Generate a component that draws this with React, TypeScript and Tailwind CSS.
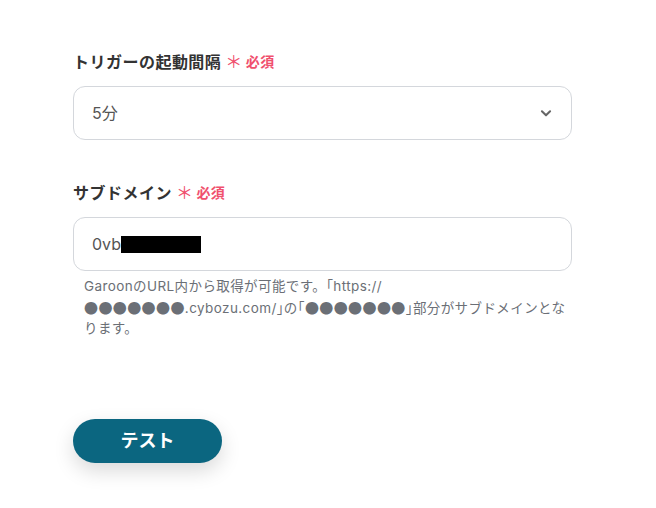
import React from "react"

function Required() {
    return (
        <span className="ml-1 inline-flex items-center gap-[3px] text-[14px] font-bold text-[#f0506e]">
            <span className="text-[17px] font-normal leading-none">＊</span>
            <span>必須</span>
        </span>
    )
}

function Dots() {
    return <span className="font-['Noto_Sans_CJK_JP'] text-[14px]">●●●●●●●</span>
}

function Half({ children }: { children: React.ReactNode }) {
    return <span className="[font-feature-settings:'halt']">{children}</span>
}

export default function App() {
    return (
        <div
            className="min-h-[508px] w-[656px] bg-white text-[#333333]"
            style={{ fontFamily: 'Inter, "Noto Sans CJK JP", sans-serif' }}
        >
            <div className="flex w-[572px] flex-col pl-[73px] pt-[48px]">
                <div className="flex items-center text-[16px] font-bold leading-[28px] tracking-[0.03em]">
                    トリガーの起動間隔
                    <Required />
                </div>
                <div className="mt-[10px] flex h-[54px] items-center justify-between rounded-[12px] border border-[#d4d7dc] pl-[18px] pr-[18px] text-[16px] text-[#555]">
                    <span>5分</span>
                    <svg width="14" height="14" viewBox="0 0 24 24" fill="none" stroke="#666" strokeWidth="3.5" strokeLinecap="round" strokeLinejoin="round">
                        <path d="M5 9l7 7 7-7" />
                    </svg>
                </div>

                <div className="mt-[39px] flex items-center text-[16px] font-bold leading-[28px] tracking-[0.03em]">
                    サブドメイン
                    <Required />
                </div>
                <div className="mt-[10px] flex h-[54px] items-center rounded-[12px] border border-[#d4d7dc] pl-[18px] text-[16px] text-[#555]">
                    <span>0vb</span>
                    <span className="inline-block h-[17px] w-[80px] bg-black" />
                </div>
                <p className="mt-[5px] whitespace-nowrap px-[11px] text-[13.5px] leading-[20.5px] tracking-[0.03em] text-[#6b6f76]">
                    GaroonのURL内から取得が可能です。<Half>「</Half>https://
                    <br />
                    <Dots />.cybozu.com/<Half>」</Half>の<Half>「</Half><Dots /><Half>」</Half>部分がサブドメインとな
                    <br />
                    ります。
                </p>

                <div className="mt-[80px]">
                    <button className="h-[44px] w-[149px] rounded-full bg-[#0b6680] text-[18px] font-bold text-white shadow-[0_8px_20px_rgba(0,0,0,0.15)]">
                        テスト
                    </button>
                </div>
            </div>
        </div>
    )
}
